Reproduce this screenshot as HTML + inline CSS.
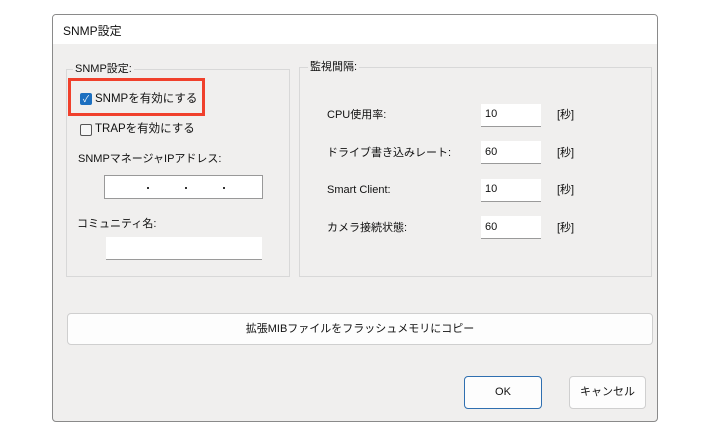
<!DOCTYPE html>
<html><head><meta charset="utf-8"><style>
body{margin:0;width:708px;height:435px;background:#fff;position:relative;overflow:hidden;font-family:"Liberation Sans","Noto Sans CJK JP",sans-serif;font-size:11px;line-height:14px;color:#111}
.a{position:absolute}
.dlg{left:52px;top:14px;width:604px;height:406px;background:#f0efee;border:1px solid #8a8a8a;border-radius:4px;overflow:hidden}
.title{left:0;top:0;width:604px;height:29px;background:#fff}
.grp{border:1px solid #d8d8d8}
.inp{background:#fff;border-bottom:1px solid #9a9a9a}
.btn{background:#fdfdfd;border:1px solid #cfcfcf;border-radius:4px;text-align:center}
.dot{width:2px;height:2px;background:#333}
</style></head><body>
<div class="a dlg">
 <div class="a title"></div>
 <div class="a" style="left:10px;top:9px;font-size:12px">SNMP設定</div>
 <div class="a grp" style="left:13px;top:54px;width:222px;height:206px"></div>
 <div class="a" style="left:20px;top:47px;background:#f0efee;padding:0 2px">SNMP設定:</div>
 <div class="a" style="left:15px;top:63px;width:131px;height:32px;border:3px solid #f0402c;background:#f0efee"></div>
 <div class="a" style="left:27px;top:78px;width:12px;height:12px;background:#1c6fc0;border-radius:2px;color:#fff;font-size:9px;line-height:12px;text-align:center">✓</div>
 <div class="a" style="left:42px;top:77px;font-size:11.5px">SNMPを有効にする</div>
 <div class="a" style="left:27px;top:109px;width:10px;height:10px;border:1px solid #555;border-radius:2px;background:#f6f6f6"></div>
 <div class="a" style="left:42px;top:107px;font-size:11.5px">TRAPを有効にする</div>
 <div class="a" style="left:25px;top:137px">SNMPマネージャIPアドレス:</div>
 <div class="a" style="left:51px;top:160px;width:157px;height:22px;background:#fff;border:1px solid #999"></div>
 <div class="a dot" style="left:94px;top:172px"></div><div class="a dot" style="left:132px;top:172px"></div><div class="a dot" style="left:170px;top:172px"></div>
 <div class="a" style="left:24px;top:202px">コミュニティ名:</div>
 <div class="a inp" style="left:53px;top:222px;width:156px;height:22px"></div>
 <div class="a grp" style="left:246px;top:52px;width:351px;height:208px"></div>
 <div class="a" style="left:255px;top:45px;background:#f0efee;padding:0 2px">監視間隔:</div>
 <div class="a" style="left:274px;top:93px">CPU使用率:</div>
 <div class="a" style="left:274px;top:131px">ドライブ書き込みレート:</div>
 <div class="a" style="left:274px;top:168px">Smart Client:</div>
 <div class="a" style="left:274px;top:206px">カメラ接続状態:</div>
 <div class="a inp" style="left:428px;top:89px;width:60px;height:22px"></div>
 <div class="a inp" style="left:428px;top:126px;width:60px;height:22px"></div>
 <div class="a inp" style="left:428px;top:164px;width:60px;height:22px"></div>
 <div class="a inp" style="left:428px;top:201px;width:60px;height:22px"></div>
 <div class="a" style="left:432px;top:92px">10</div>
 <div class="a" style="left:432px;top:130px">60</div>
 <div class="a" style="left:432px;top:167px">10</div>
 <div class="a" style="left:432px;top:205px">60</div>
 <div class="a" style="left:504px;top:93px">[秒]</div>
 <div class="a" style="left:504px;top:131px">[秒]</div>
 <div class="a" style="left:504px;top:168px">[秒]</div>
 <div class="a" style="left:504px;top:206px">[秒]</div>
 <div class="a btn" style="left:14px;top:298px;width:584px;height:30px;line-height:30px">拡張MIBファイルをフラッシュメモリにコピー</div>
 <div class="a btn" style="left:411px;top:361px;width:76px;height:31px;line-height:31px;border:1px solid #2f6fb0">OK</div>
 <div class="a btn" style="left:516px;top:361px;width:75px;height:31px;line-height:31px">キャンセル</div>
</div>
</body></html>
